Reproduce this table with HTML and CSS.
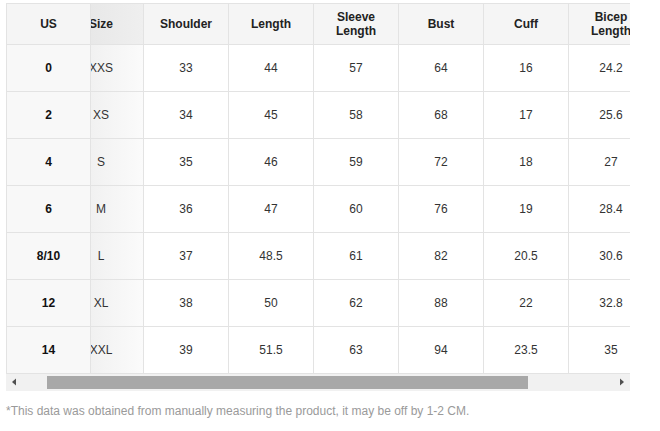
FILE: index.html
```html
<!DOCTYPE html>
<html>
<head>
<meta charset="utf-8">
<link rel="stylesheet" href="styles.css">
</head>
<body>
<div class="chart">
  <div class="table-box">
    <div class="fixed-col">
      <div class="cell head">US</div>
      <div class="cell bold">0</div>
      <div class="cell bold">2</div>
      <div class="cell bold">4</div>
      <div class="cell bold">6</div>
      <div class="cell bold">8/10</div>
      <div class="cell bold">12</div>
      <div class="cell bold">14</div>
    </div>
    <div class="scroll-area">
      <div class="grid">
        <div class="cell head size">Size</div>
        <div class="cell head">Shoulder</div>
        <div class="cell head">Length</div>
        <div class="cell head">Sleeve<br>Length</div>
        <div class="cell head">Bust</div>
        <div class="cell head">Cuff</div>
        <div class="cell head">Bicep<br>Length</div>

        <div class="cell size">XXS</div><div class="cell">33</div><div class="cell">44</div><div class="cell">57</div><div class="cell">64</div><div class="cell">16</div><div class="cell">24.2</div>
        <div class="cell size">XS</div><div class="cell">34</div><div class="cell">45</div><div class="cell">58</div><div class="cell">68</div><div class="cell">17</div><div class="cell">25.6</div>
        <div class="cell size">S</div><div class="cell">35</div><div class="cell">46</div><div class="cell">59</div><div class="cell">72</div><div class="cell">18</div><div class="cell">27</div>
        <div class="cell size">M</div><div class="cell">36</div><div class="cell">47</div><div class="cell">60</div><div class="cell">76</div><div class="cell">19</div><div class="cell">28.4</div>
        <div class="cell size">L</div><div class="cell">37</div><div class="cell">48.5</div><div class="cell">61</div><div class="cell">82</div><div class="cell">20.5</div><div class="cell">30.6</div>
        <div class="cell size">XL</div><div class="cell">38</div><div class="cell">50</div><div class="cell">62</div><div class="cell">88</div><div class="cell">22</div><div class="cell">32.8</div>
        <div class="cell size">XXL</div><div class="cell">39</div><div class="cell">51.5</div><div class="cell">63</div><div class="cell">94</div><div class="cell">23.5</div><div class="cell">35</div>
      </div>
    </div>
  </div>
  <div class="scrollbar">
    <div class="sb-btn">
      <svg width="17" height="17" viewBox="0 0 17 17"><polygon points="10,4.5 10,11.5 6,8" fill="#505050"/></svg>
    </div>
    <div class="sb-track"><div class="sb-thumb"></div></div>
    <div class="sb-btn">
      <svg width="17" height="17" viewBox="0 0 17 17"><polygon points="7,4.5 7,11.5 11,8" fill="#505050"/></svg>
    </div>
  </div>
  <p class="note">*This data was obtained from manually measuring the product, it may be off by 1-2 CM.</p>
</div>
</body>
</html>
```
FILE: styles.css
```css
html, body {
  margin: 0;
  padding: 0;
  background: #ffffff;
}
body {
  font-family: "Liberation Sans", Arial, sans-serif;
  font-size: 12px;
  color: #333333;
}
.chart {
  padding: 3px 0 0 6px;
  width: 624px;
}
.table-box {
  display: flex;
  border-top: 1px solid #e3e3e3;
  border-left: 1px solid #e3e3e3;
  overflow: hidden;
}
.fixed-col {
  width: 84px;
  flex: none;
  display: grid;
  grid-template-rows: 41px repeat(7, 47px);
  background: #f8f8f8;
}
.scroll-area {
  flex: 1;
  overflow: hidden;
}
.grid {
  display: grid;
  grid-template-columns: repeat(7, 85px);
  grid-template-rows: 41px repeat(7, 47px);
  margin-left: -32px;
  width: 595px;
}
.cell {
  box-sizing: border-box;
  border-right: 1px solid #e3e3e3;
  border-bottom: 1px solid #e3e3e3;
  display: flex;
  align-items: center;
  justify-content: center;
  text-align: center;
  line-height: 14px;
  white-space: nowrap;
}
.head {
  font-weight: bold;
  background: #f5f5f5;
  color: #222222;
}
.bold {
  font-weight: bold;
  color: #111111;
}
.size {
  background: linear-gradient(to right, #f1f1f1 32px, #fbfbfb 85px);
}
.head.size {
  background: linear-gradient(to right, #e8e8e8 32px, #efefef 85px);
}
.scrollbar {
  display: flex;
  height: 17px;
  background: #f1f1f1;
}
.sb-btn {
  width: 17px;
  height: 17px;
  flex: none;
}
.sb-btn svg {
  display: block;
}
.sb-track {
  flex: 1;
  display: flex;
  align-items: center;
}
.sb-thumb {
  margin-left: 24px;
  width: 481px;
  height: 13px;
  background: #a8a8a8;
}
.note {
  margin: 13px 0 0 0;
  color: #9a9a9a;
  line-height: 14px;
  white-space: nowrap;
}
```
